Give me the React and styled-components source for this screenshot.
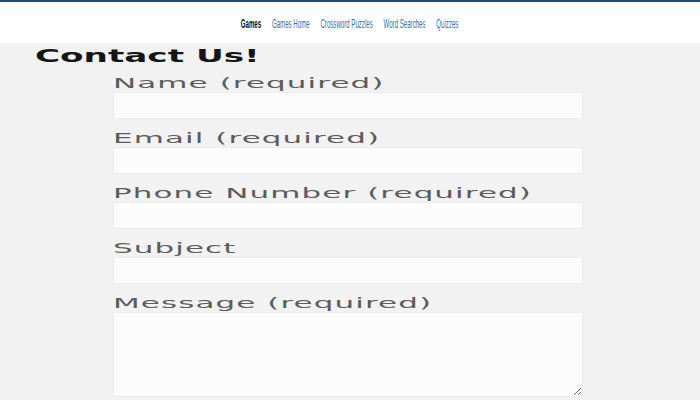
import React from "react";
import styled, { createGlobalStyle } from "styled-components";

const Global = createGlobalStyle`
  html, body { margin: 0; padding: 0; background: #f2f2f2; }
  body { font-family: "DejaVu Sans", sans-serif; overflow: hidden; }
`;

const Header = styled.header`
  height: 41px;
  border-top: 2px solid #2b4868;
  background: linear-gradient(#f5f5f5 0px, #ffffff 14px);
  display: flex;
  align-items: center;
  justify-content: center;
`;

const NavList = styled.nav`
  display: flex;
  gap: 23px;
  transform: scaleX(0.47);
  transform-origin: center;
  padding-top: 1px;
`;

const NavLink = styled.a`
  font-family: "Liberation Sans", sans-serif;
  font-size: 13px;
  color: ${(p) => (p.$active ? "#111" : "#3d6f9c")};
  font-weight: ${(p) => (p.$active ? 700 : 400)};
  text-decoration: none;
  white-space: nowrap;
`;

const Main = styled.main`
  padding: 0 0 0 35px;
`;

const Heading = styled.h1`
  margin: 0;
  height: 31px;
  line-height: 26px;
  font-size: 18px;
  font-weight: 700;
  color: #151515;
  white-space: nowrap;
  span {
    display: inline-block;
    transform: scaleX(1.9);
    transform-origin: left center;
  }
`;

const Form = styled.form`
  margin-left: 78px;
  width: 470px;
  display: flex;
  flex-direction: column;
  gap: 10px;
`;

const Field = styled.div`
  display: flex;
  flex-direction: column;
`;

const Label = styled.label`
  height: 18px;
  line-height: 18px;
  font-size: 14px;
  letter-spacing: 0.5px;
  color: #5c5c5c;
  white-space: nowrap;
  span {
    display: inline-block;
    transform: scaleX(2.21);
    transform-origin: left center;
  }
`;

const Input = styled.input`
  box-sizing: border-box;
  height: 27px;
  width: 100%;
  margin: 0;
  border: 1px solid #ececec;
  background: #fcfcfc;
  outline: none;
`;

const TextArea = styled.textarea`
  box-sizing: border-box;
  height: 85px;
  width: 100%;
  margin: 0;
  border: 1px solid #ececec;
  background: #fcfcfc;
  outline: none;
  resize: vertical;
`;

const fields = [
  "Name (required)",
  "Email (required)",
  "Phone Number (required)",
  "Subject",
];

export default function App() {
  return (
    <>
      <Global />
      <Header>
        <NavList>
          <NavLink $active href="#">Games</NavLink>
          <NavLink href="#">Games Home</NavLink>
          <NavLink href="#">Crossword Puzzles</NavLink>
          <NavLink href="#">Word Searches</NavLink>
          <NavLink href="#">Quizzes</NavLink>
        </NavList>
      </Header>
      <Main>
        <Heading><span>Contact Us!</span></Heading>
        <Form>
          {fields.map((f) => (
            <Field key={f}>
              <Label><span>{f}</span></Label>
              <Input type="text" />
            </Field>
          ))}
          <Field>
            <Label><span>Message (required)</span></Label>
            <TextArea />
          </Field>
        </Form>
      </Main>
    </>
  );
}
